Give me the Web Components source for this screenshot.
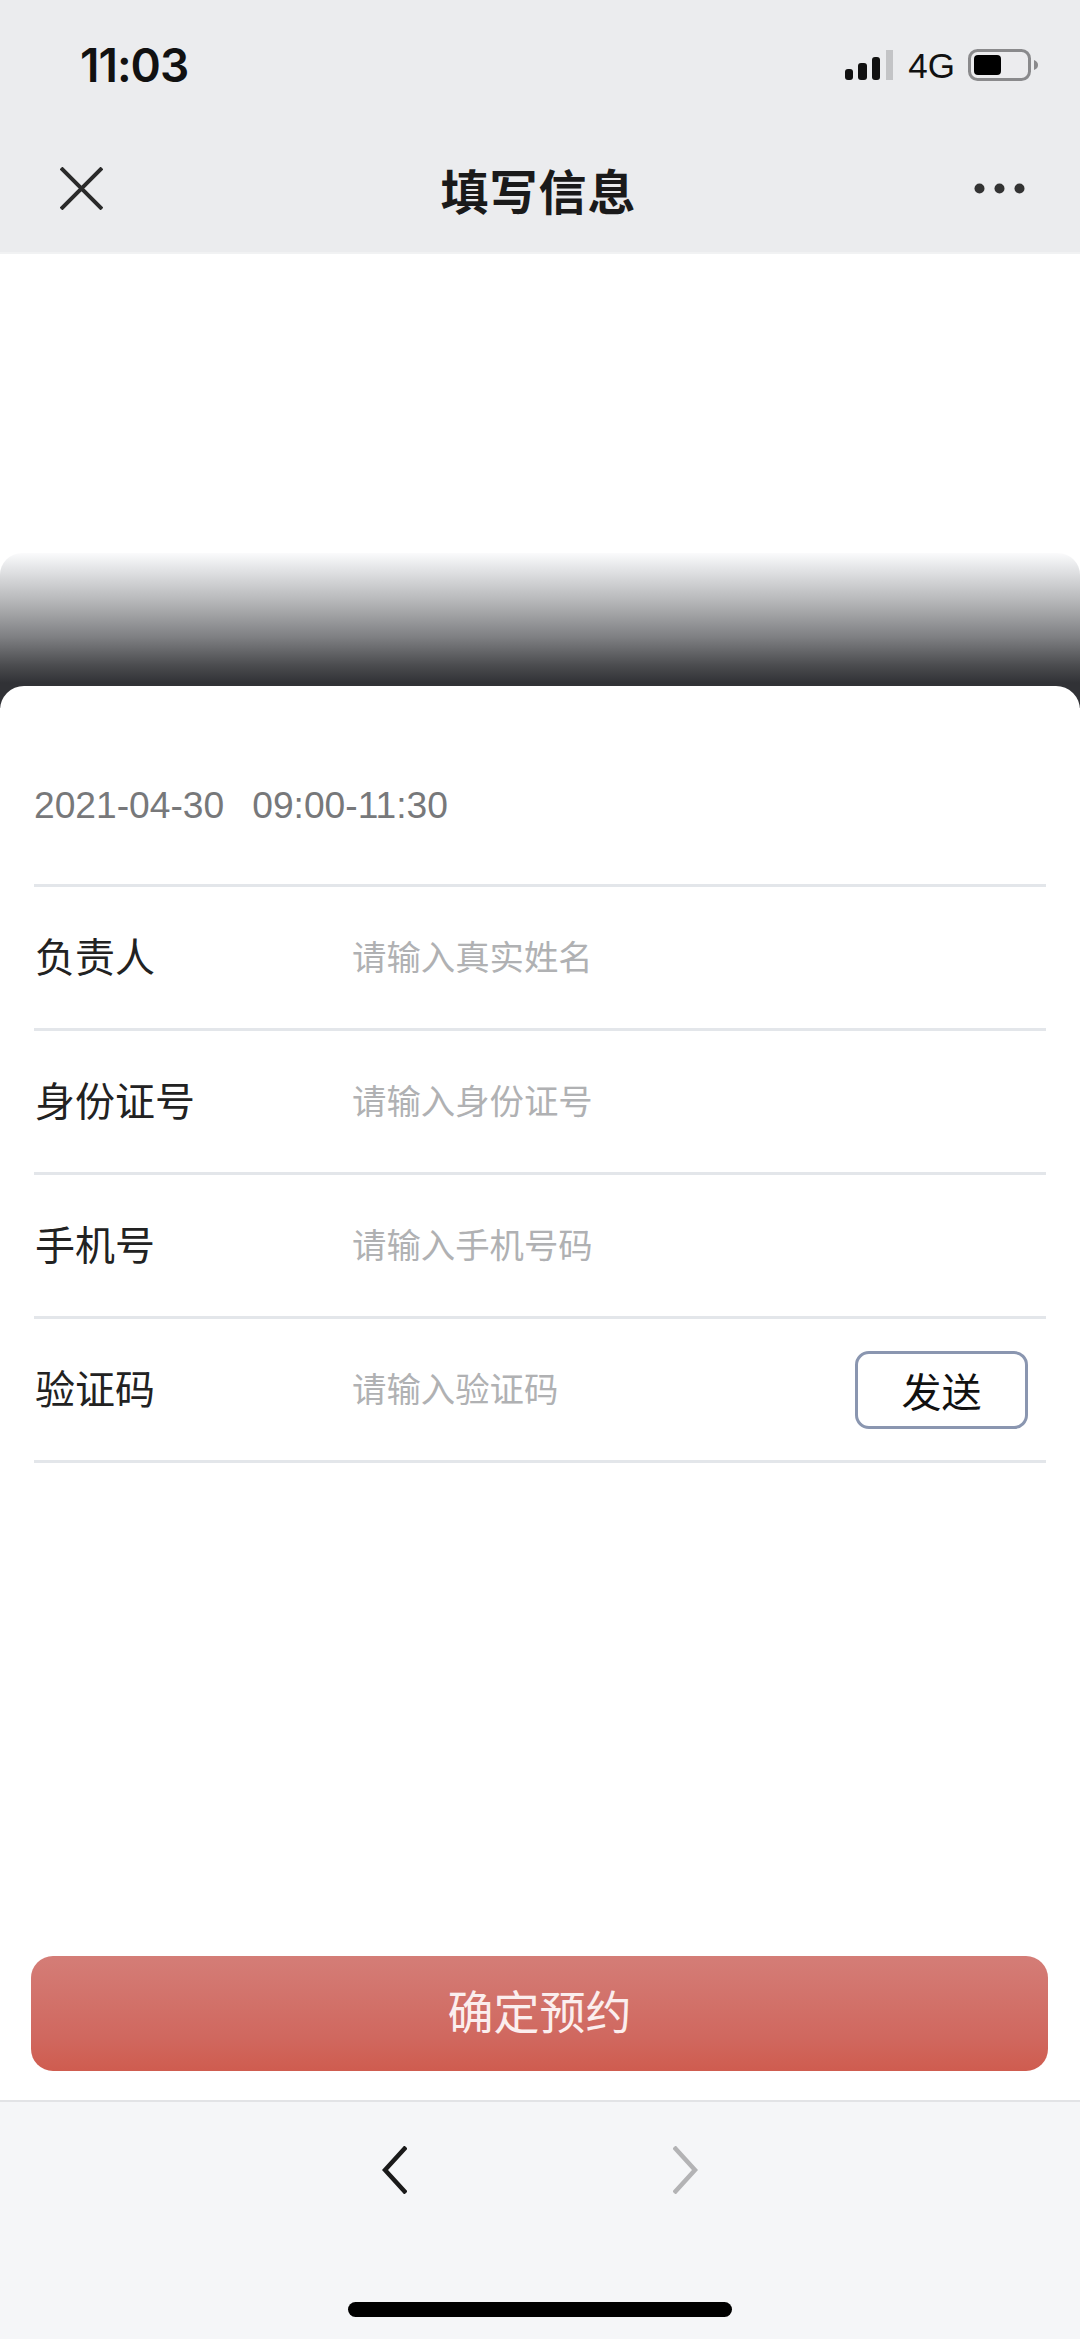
<!DOCTYPE html>
<html lang="zh">
<head>
<meta charset="utf-8">
<title>填写信息</title>
<style>
  html, body { margin: 0; padding: 0; background: #fff; }
  body { width: 1080px; height: 2339px; overflow: hidden; font-family: "Liberation Sans", "Noto Sans CJK SC", sans-serif; }
  #page { display: flex; flex-direction: column; height: 2339px; }
</style>
</head>
<body>
<div id="page">
  <app-status-bar time="11:03" network="4G"></app-status-bar>
  <app-nav-bar>填写信息</app-nav-bar>
  <app-shade></app-shade>
  <app-sheet>
    <app-slot-date slot="date"><span>2021-04-30</span><span>09:00-11:30</span></app-slot-date>
    <app-form-row label="负责人" placeholder="请输入真实姓名"></app-form-row>
    <app-form-row label="身份证号" placeholder="请输入身份证号"></app-form-row>
    <app-form-row label="手机号" placeholder="请输入手机号码"></app-form-row>
    <app-form-row label="验证码" placeholder="请输入验证码"><app-send-button>发送</app-send-button></app-form-row>
    <app-confirm-button slot="action">确定预约</app-confirm-button>
  </app-sheet>
  <app-browser-bar></app-browser-bar>
</div>

<script>
function define(name, html) {
  customElements.define(name, class extends HTMLElement {
    constructor() {
      super();
      this.attachShadow({ mode: 'open' });
      let out = html;
      for (const a of this.getAttributeNames()) out = out.split('{{' + a + '}}').join(this.getAttribute(a));
      this.shadowRoot.innerHTML = out;
    }
  });
}

const cjk = '"Liberation Sans", "Noto Sans CJK SC", sans-serif';

define('app-status-bar', `
  <style>
    :host { display: flex; align-items: center; height: 100px; padding: 30px 41px 0 80px; box-sizing: border-box; background: #ebecee; color: #111; font-family: Inter, ${cjk}; }
    .time { font-size: 46px; font-weight: 600; letter-spacing: -1px; flex: 1; line-height: 1; margin-top: -1px; }
    .net { font-size: 35px; font-weight: 400; margin: 0 13px 0 15px; line-height: 1; font-family: "Liberation Sans", sans-serif; }
    svg { display: block; }
  </style>
  <span class="time">{{time}}</span>
  <svg width="48" height="30" viewBox="0 0 48 30">
    <rect x="0" y="19" width="8" height="11" rx="3" fill="#111"/>
    <rect x="13" y="13" width="9" height="17" rx="3" fill="#111"/>
    <rect x="27" y="7" width="8" height="23" rx="3" fill="#111"/>
    <rect x="41" y="0" width="7" height="30" fill="#c3c4c6"/>
  </svg>
  <span class="net">{{network}}</span>
  <svg width="71" height="32" viewBox="0 0 71 32">
    <rect x="1.5" y="1.5" width="60" height="29" rx="8" fill="#ececee" stroke="#8a8a8c" stroke-width="3"/>
    <rect x="6" y="6" width="27" height="20" rx="4" fill="#000"/>
    <path d="M66 11c3 1 4 3 4 5s-1 4-4 5z" fill="#8a8a8c"/>
  </svg>
`);

define('app-nav-bar', `
  <style>
    :host { display: flex; align-items: center; justify-content: space-between; height: 154px; padding: 25px 55px 0 60px; box-sizing: border-box; background: #ebecee; border-bottom: 2px solid #f1f2f3; }
    .title { font: 600 48px ${cjk}; color: #1a1a1a; letter-spacing: 1px; }
    svg { display: block; }
  </style>
  <svg width="43" height="43" viewBox="0 0 43 43" fill="none" stroke="#2a2a2a" stroke-width="4"><path d="M1 1L42 42M42 1L1 42"/></svg>
  <span class="title"><slot></slot></span>
  <svg width="51" height="11" viewBox="0 0 51 11" fill="#333"><circle cx="5.5" cy="5.5" r="5"/><circle cx="25.5" cy="5.5" r="5"/><circle cx="45.5" cy="5.5" r="5"/></svg>
`);

define('app-shade', `
  <style>
    :host { display: block; margin-top: 299px; height: 155px; border-radius: 22px 22px 0 0; background: linear-gradient(#fbfbfc 0, #e6e7e9 14px, #b3b4b6 50px, #7d7e81 85px, #4a4b4e 113px, #313236 130px, #313236 100%); }
  </style>
`);

define('app-sheet', `
  <style>
    :host { display: flex; flex-direction: column; flex: 1; margin-top: -22px; padding: 0 34px; background: #fff; border-radius: 24px 24px 0 0; }
    .date { height: 201px; box-sizing: border-box; padding-top: 97px; border-bottom: 3px solid #e3e6ea; }
    .rows { flex: 1; }
    .action { margin: 0 -2px 29px -3px; }
  </style>
  <div class="date"><slot name="date"></slot></div>
  <div class="rows"><slot></slot></div>
  <div class="action"><slot name="action"></slot></div>
`);

define('app-slot-date', `
  <style>
    :host { display: flex; gap: 28px; font: 37.2px/44px "Liberation Sans", sans-serif; color: #77787a; }
  </style>
  <slot></slot>
`);

define('app-form-row', `
  <style>
    :host { display: flex; align-items: center; height: 144px; box-sizing: border-box; border-bottom: 3px solid #e3e6ea; }
    .label { width: 318px; flex: none; box-sizing: border-box; padding: 0 0 6px 1px; font: 40px ${cjk}; color: #222; }
    .hint { flex: 1; padding-bottom: 6px; font: 34.4px ${cjk}; color: #b0b1b3; }
  </style>
  <span class="label">{{label}}</span>
  <span class="hint">{{placeholder}}</span>
  <slot></slot>
`);

define('app-send-button', `
  <style>
    :host { display: flex; align-items: center; justify-content: center; width: 173px; height: 78px; box-sizing: border-box; margin-right: 18px; border: 3px solid #8a96b0; border-radius: 14px; font: 40px ${cjk}; color: #111; }
  </style>
  <slot></slot>
`);

define('app-confirm-button', `
  <style>
    :host { display: flex; align-items: center; justify-content: center; height: 115px; box-sizing: border-box; padding-bottom: 10px; border-radius: 22px; background: linear-gradient(#d47d77, #d0685f 70%, #cf5c4f); font: 46px ${cjk}; color: #fbeeee; }
  </style>
  <slot></slot>
`);

define('app-browser-bar', `
  <style>
    :host { display: flex; flex-direction: column; align-items: center; height: 239px; box-sizing: border-box; background: #f5f6f8; border-top: 2px solid #e2e3e6; }
    .arrows { display: flex; gap: 266px; margin-top: 44px; }
    .home { width: 384px; height: 15px; margin-top: 108px; border-radius: 8px; background: #000; }
    svg { display: block; }
  </style>
  <div class="arrows">
    <svg width="25" height="48" viewBox="0 0 25 48" fill="none" stroke="#1a1a1a" stroke-width="4.5"><path d="M24 1L3 24L24 47"/></svg>
    <svg width="25" height="48" viewBox="0 0 25 48" fill="none" stroke="#b3b3b5" stroke-width="4.5"><path d="M1 1L22 24L1 47"/></svg>
  </div>
  <div class="home"></div>
`);
</script>
</body>
</html>
